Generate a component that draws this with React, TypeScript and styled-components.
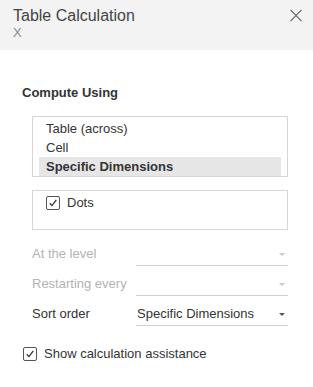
import { createGlobalStyle } from "styled-components";
import styled from "styled-components";

const GlobalStyle = createGlobalStyle`
	body {
		margin: 0;
		background: #ffffff;
		font-family: "Liberation Sans", Arial, sans-serif;
		color: #333333;
	}
`;

// === cabecera ===
const Header = styled.div`
	height: 50px;
	box-sizing: border-box;
	background: #f3f3f3;
	padding: 6px 11px 0 13px;
	display: flex;
	justify-content: space-between;
	align-items: flex-start;
`;

const Title = styled.div`
	font-size: 16px;
	line-height: 20px;
	color: #444444;
`;

const SubTitle = styled.div`
	font-size: 13px;
	line-height: 16px;
	margin-top: -1px;
	color: #8a8a8a;
`;

const CloseButton = styled.button`
	border: none;
	background: none;
	padding: 0;
	margin-top: 3px;
	width: 12px;
	height: 13px;
	display: flex;
	cursor: pointer;
`;

// === cuerpo ===
const Body = styled.div`
	padding: 0 25px 0 22px;
`;

const SectionTitle = styled.div`
	margin-top: 35px;
	font-size: 13px;
	line-height: 16px;
	font-weight: bold;
	color: #333333;
`;

const ListBox = styled.div`
	margin: 15px 0 0 10px;
	border: 1px solid #d6d6d6;
	padding: 2px 6px 0;
`;

const ListItem = styled.div<{ $selected?: boolean }>`
	height: 19px;
	line-height: 19px;
	padding-left: 7px;
	font-size: 13px;
	color: #333333;
	font-weight: ${(p) => (p.$selected ? "bold" : "normal")};
	background: ${(p) => (p.$selected ? "#e6e6e6" : "transparent")};
`;

const DimBox = styled.div`
	margin: 13px 0 0 10px;
	height: 40px;
	box-sizing: border-box;
	border: 1px solid #d6d6d6;
	padding: 4px 13px;
`;

const CheckRow = styled.label<{ $gap: number }>`
	display: flex;
	align-items: center;
	gap: ${(p) => p.$gap}px;
	font-size: 13px;
	line-height: 16px;
	color: #333333;
	cursor: pointer;
`;

const Box = styled.span`
	width: 12px;
	height: 12px;
	border: 1px solid #555555;
	border-radius: 2px;
	display: flex;
	align-items: center;
	justify-content: center;
	background: #ffffff;
	flex-shrink: 0;
`;

const Fields = styled.div`
	margin: 6px 0 0 10px;
`;

const FieldRow = styled.div`
	display: grid;
	grid-template-columns: 104px 1fr;
	height: 30px;
	align-items: end;
`;

const FieldLabel = styled.div<{ $disabled?: boolean }>`
	font-size: 13px;
	line-height: 20px;
	padding-bottom: 2px;
	color: ${(p) => (p.$disabled ? "#b3b3b3" : "#333333")};
`;

const Select = styled.div<{ $disabled?: boolean }>`
	display: flex;
	justify-content: space-between;
	align-items: center;
	font-size: 13px;
	line-height: 20px;
	padding: 0 2px 1px 1px;
	border-bottom: 1px solid #d0d0d0;
	color: #333333;
	min-height: 20px;
`;

const Arrow = styled.span<{ $disabled?: boolean }>`
	width: 0;
	height: 0;
	border-left: 3px solid transparent;
	border-right: 3px solid transparent;
	border-top: 3px solid ${(p) => (p.$disabled ? "#c8c8c8" : "#555555")};
	margin-right: 1px;
`;

const Footer = styled.div`
	margin: 20px 0 0 1px;
`;

function Check() {
	return (
		<Box>
			<svg width="10" height="10" viewBox="0 0 10 10">
				<path
					d="M1.8 5.2 L4 7.6 L8.3 1.8"
					fill="none"
					stroke="#333"
					strokeWidth="1.3"
				/>
			</svg>
		</Box>
	);
}

const fields = [
	{ label: "At the level", value: "", disabled: true },
	{ label: "Restarting every", value: "", disabled: true },
	{ label: "Sort order", value: "Specific Dimensions", disabled: false },
];

export default function App() {
	return (
		<>
			<GlobalStyle />
			<Header>
				<div>
					<Title>Table Calculation</Title>
					<SubTitle>X</SubTitle>
				</div>
				<CloseButton aria-label="Close">
					<svg width="12" height="13" viewBox="0 0 12 13">
						<path
							d="M0.5 0.8 L11.5 12.2 M11.5 0.8 L0.5 12.2"
							stroke="#666"
							strokeWidth="1.2"
						/>
					</svg>
				</CloseButton>
			</Header>
			<Body>
				<SectionTitle>Compute Using</SectionTitle>
				<ListBox>
					<ListItem>Table (across)</ListItem>
					<ListItem>Cell</ListItem>
					<ListItem $selected>Specific Dimensions</ListItem>
				</ListBox>
				<DimBox>
					<CheckRow $gap={7}>
						<Check />
						Dots
					</CheckRow>
				</DimBox>
				<Fields>
					{fields.map((f) => (
						<FieldRow key={f.label}>
							<FieldLabel $disabled={f.disabled}>{f.label}</FieldLabel>
							<Select $disabled={f.disabled}>
								<span>{f.value}</span>
								<Arrow $disabled={f.disabled} />
							</Select>
						</FieldRow>
					))}
				</Fields>
				<Footer>
					<CheckRow $gap={7}>
						<Check />
						Show calculation assistance
					</CheckRow>
				</Footer>
			</Body>
		</>
	);
}
